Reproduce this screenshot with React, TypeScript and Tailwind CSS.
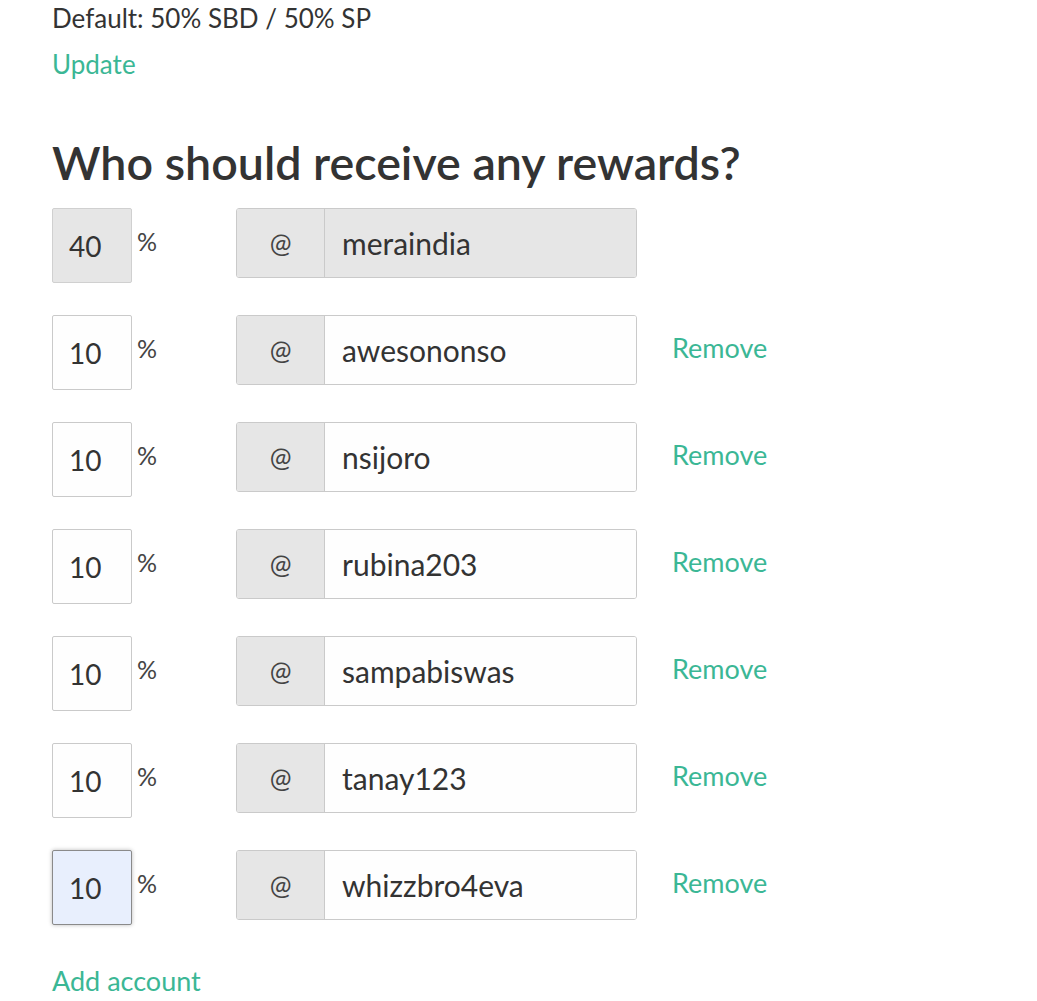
import React from 'react';

const rows = [
  { pct: '40', name: 'meraindia', locked: true },
  { pct: '10', name: 'awesononso' },
  { pct: '10', name: 'nsijoro' },
  { pct: '10', name: 'rubina203' },
  { pct: '10', name: 'sampabiswas' },
  { pct: '10', name: 'tanay123' },
  { pct: '10', name: 'whizzbro4eva', focused: true },
];

function RewardRow({ pct, name, locked, focused }: { pct: string; name: string; locked?: boolean; focused?: boolean }) {
  const pctBox = locked
    ? 'bg-[#e6e6e6] border-[#d0d0d0]'
    : focused
      ? 'bg-[#e8effd] border-[#8a8a8a] shadow-[0_0_4px_#bbb]'
      : 'bg-[#fefefe] border-[#cacaca]';

  return (
    <div className="flex items-start h-[75px]">
      <div className="flex items-start w-[184px]">
        <div className={`w-[80px] h-[75px] border rounded-[2px] flex items-center pl-[16px] text-[28px] text-[#333] ${pctBox}`}>
          {pct}
        </div>
        <span className="ml-[5px] mt-[15px] text-[25px] text-[#444]">%</span>
      </div>
      <div className="flex w-[401px] h-[70px] border border-[#cacaca] rounded-[3px] overflow-hidden">
        <div className="w-[88px] bg-[#e6e6e6] border-r border-[#cacaca] flex items-center justify-center text-[26px] text-[#444]">@</div>
        <div className={`flex-1 flex items-center pl-[17px] text-[30px] text-[#333] ${locked ? 'bg-[#e6e6e6]' : 'bg-[#fefefe]'}`}>{name}</div>
      </div>
      {!locked && (
        <a className="ml-[35px] h-[66px] flex items-center text-[27px] text-[#3bb795] cursor-pointer">Remove</a>
      )}
    </div>
  );
}

export default function App() {
  return (
    <div className="min-h-[1001px] bg-white pl-[52px] font-['Lato',sans-serif] text-[#333]">
      <p className="text-[26px] leading-[36px]">Default: 50% SBD / 50% SP</p>
      <a className="block mt-[10px] text-[26px] leading-[36px] text-[#3bb795]">Update</a>
      <h2 className="mt-[50px] text-[46.6px] leading-[60px] font-semibold text-[#333]">Who should receive any rewards?</h2>
      <div className="mt-[16px] flex flex-col gap-[32px]">
        {rows.map(r => (
          <RewardRow key={r.name} {...r} />
        ))}
      </div>
      <a className="block mt-[38px] text-[27px] leading-[36px] text-[#3bb795]">Add account</a>
    </div>
  );
}
